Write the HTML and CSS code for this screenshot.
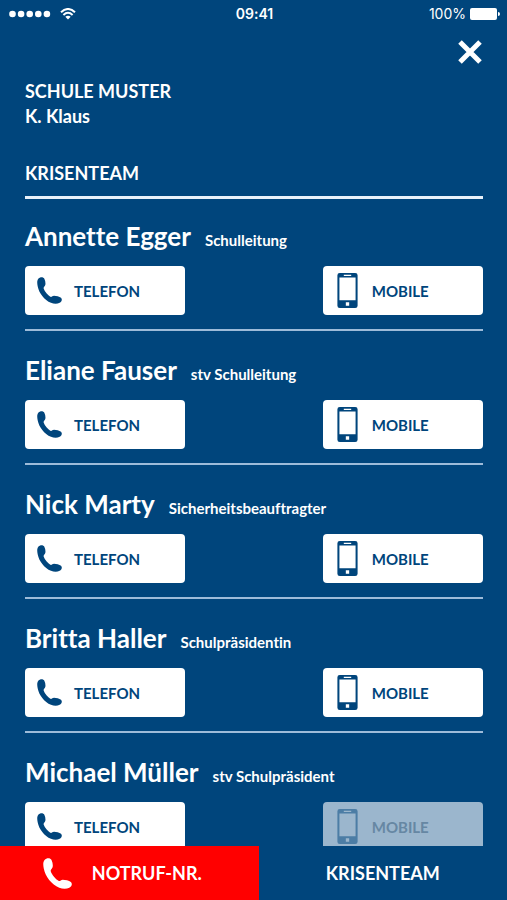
FILE: index.html
```html
<!DOCTYPE html>
<html lang="de">
<head>
<meta charset="utf-8">
<meta name="viewport" content="width=device-width, initial-scale=1">
<title>Krisenteam</title>
<link rel="stylesheet" href="styles.css">
</head>
<body>
<svg class="sprite" aria-hidden="true">
  <symbol id="phone" viewBox="0 0 75 80">
    <path d="M4 5C9-1 19-1 22 5C25 11 26 18 25 23C24 28 19 29 20 34C23 44 33 54 40 59C44 61 46 56 51 56C58 56 67 58 72 62C77 67 74 73 68 77C60 81 50 80 42 77C22 68 6 48 2 27C0 17 0 10 4 5Z"/>
  </symbol>
  <symbol id="mobile" viewBox="0 0 60 104">
    <path fill-rule="evenodd" d="M7 0H53Q60 0 60 7V97Q60 104 53 104H7Q0 104 0 97V7Q0 0 7 0ZM6 13V81H54V13ZM19 5V9H41V5ZM25 87V97H35V87Z"/>
  </symbol>
</svg>
<div class="app">
  <header class="status">
    <div class="signal">
      <svg class="dots" viewBox="0 0 42 8" aria-hidden="true"><circle cx="3.5" cy="4" r="3.3"/><circle cx="12.1" cy="4" r="3.3"/><circle cx="20.7" cy="4" r="3.3"/><circle cx="29.3" cy="4" r="3.3"/><circle cx="37.9" cy="4" r="3.3"/></svg>
      <svg class="wifi" viewBox="0 0 16 12" aria-hidden="true"><path d="M1 4.3Q8-2.3 15 4.3M3.4 6.9Q8 2.7 12.6 6.9"/><path class="wifi-base" d="M5.3 8.8Q8 6.6 10.7 8.8L8 11.6Z"/></svg>
    </div>
    <time class="clock">09:41</time>
    <div class="power">
      <span>100%</span>
      <svg class="battery" viewBox="0 0 30 12" aria-hidden="true"><rect width="27" height="12" rx="2"/><path d="M28 4Q30 4 30 6T28 8Z"/></svg>
    </div>
  </header>
  <div class="toolbar">
    <button class="close" type="button" aria-label="Schliessen"><svg viewBox="0 0 24 24" aria-hidden="true"><path d="M2 2L22 22M22 2L2 22"/></svg></button>
  </div>
  <main class="content">
    <div class="school">
      <h1>SCHULE MUSTER</h1>
      <p>K. Klaus</p>
    </div>
    <h2 class="heading">KRISENTEAM</h2>
    <ul class="contacts">
      <li class="contact">
        <div class="person"><h3>Annette Egger</h3><span>Schulleitung</span></div>
        <div class="calls">
          <button class="call" type="button"><svg class="phone"><use href="#phone"/></svg>TELEFON</button>
          <button class="call" type="button"><svg class="mobile"><use href="#mobile"/></svg>MOBILE</button>
        </div>
      </li>
      <li class="contact">
        <div class="person"><h3>Eliane Fauser</h3><span>stv Schulleitung</span></div>
        <div class="calls">
          <button class="call" type="button"><svg class="phone"><use href="#phone"/></svg>TELEFON</button>
          <button class="call" type="button"><svg class="mobile"><use href="#mobile"/></svg>MOBILE</button>
        </div>
      </li>
      <li class="contact">
        <div class="person"><h3>Nick Marty</h3><span>Sicherheitsbeauftragter</span></div>
        <div class="calls">
          <button class="call" type="button"><svg class="phone"><use href="#phone"/></svg>TELEFON</button>
          <button class="call" type="button"><svg class="mobile"><use href="#mobile"/></svg>MOBILE</button>
        </div>
      </li>
      <li class="contact">
        <div class="person"><h3>Britta Haller</h3><span>Schulpräsidentin</span></div>
        <div class="calls">
          <button class="call" type="button"><svg class="phone"><use href="#phone"/></svg>TELEFON</button>
          <button class="call" type="button"><svg class="mobile"><use href="#mobile"/></svg>MOBILE</button>
        </div>
      </li>
      <li class="contact">
        <div class="person"><h3>Michael Müller</h3><span>stv Schulpräsident</span></div>
        <div class="calls">
          <button class="call" type="button"><svg class="phone"><use href="#phone"/></svg>TELEFON</button>
          <button class="call" type="button" disabled><svg class="mobile"><use href="#mobile"/></svg>MOBILE</button>
        </div>
      </li>
    </ul>
  </main>
  <nav class="tabs">
    <button class="tab emergency" type="button"><svg class="phone"><use href="#phone"/></svg>NOTRUF-NR.</button>
    <button class="tab" type="button">KRISENTEAM</button>
  </nav>
</div>
</body>
</html>
```

FILE: styles.css
```css
* {
  box-sizing: border-box;
}

body,
h1,
h2,
h3,
p,
ul {
  margin: 0;
  padding: 0;
}

body {
  background: #00457c;
  color: #fff;
  font-family: Lato, "Open Sans", sans-serif;
  font-weight: 700;
  font-variant-ligatures: none;
}

button {
  border: 0;
  padding: 0;
  background: none;
  color: inherit;
  font: inherit;
}

svg {
  display: block;
  flex: none;
  fill: currentColor;
}

.sprite {
  position: absolute;
  width: 0;
  height: 0;
}

.app {
  display: flex;
  flex-direction: column;
  height: 100vh;
}

.status {
  display: grid;
  grid-template-columns: 1fr auto 1fr;
  align-items: center;
  padding: 4px 7px 0 9px;
  font-family: Inter, sans-serif;
  font-size: 14px;
  line-height: 20px;
}

.signal,
.power {
  display: flex;
  align-items: center;
}

.signal {
  gap: 9px;
}

.power {
  justify-content: flex-end;
  gap: 4px;
  font-weight: 400;
}

.clock {
  font-weight: 600;
}

.dots {
  width: 42px;
  height: 8px;
}

.wifi {
  width: 16px;
  height: 12px;
  fill: none;
  stroke: currentColor;
  stroke-width: 2;
}

.wifi-base {
  fill: currentColor;
  stroke: none;
}

.battery {
  width: 30px;
  height: 12px;
}

.toolbar {
  display: flex;
  justify-content: flex-end;
  padding: 16px 25px 0;
}

.close svg {
  width: 24px;
  height: 24px;
  stroke: currentColor;
  stroke-width: 5;
}

.content {
  flex: 1;
  min-height: 0;
  overflow-y: auto;
  scrollbar-width: none;
  padding: 15px 24px 0 25px;
}

.school,
.school h1,
.heading {
  font-size: 18px;
  line-height: 25px;
}

.heading {
  margin-top: 32px;
  padding-bottom: 10px;
  border-bottom: 3px solid #e8f1fa;
}

.contacts {
  list-style: none;
}

.contact {
  padding: 21px 0 14px;
  border-bottom: 2px solid #9dbbd9;
}

.contact + .contact {
  padding-top: 23px;
}

.person {
  display: flex;
  align-items: baseline;
  gap: 14px;
  height: 32px;
  line-height: 32px;
}

.person h3 {
  font-size: 26px;
}

.person span {
  font-size: 15px;
}

.calls {
  display: flex;
  justify-content: space-between;
  margin-top: 14px;
}

.call {
  display: flex;
  align-items: center;
  gap: 12px;
  width: 35%;
  height: 49px;
  padding-left: 12px;
  border-radius: 4px;
  background: #fff;
  color: #00457c;
  font-size: 15px;
}

.call:disabled {
  background: #9bb6cd;
  color: #6687a3;
}

.call:disabled .mobile {
  color: #4c7da5;
}

.phone {
  width: 25px;
  height: 27px;
}

.mobile {
  width: 25px;
  height: 35px;
}

.tabs {
  display: grid;
  grid-template-columns: 51fr 49fr;
  height: 54px;
}

.tab {
  display: flex;
  align-items: center;
  justify-content: center;
  gap: 20px;
  font-size: 18px;
}

.emergency {
  padding-right: 14px;
  background: #f00;
}

.emergency .phone {
  width: 29px;
  height: 31px;
}
```
